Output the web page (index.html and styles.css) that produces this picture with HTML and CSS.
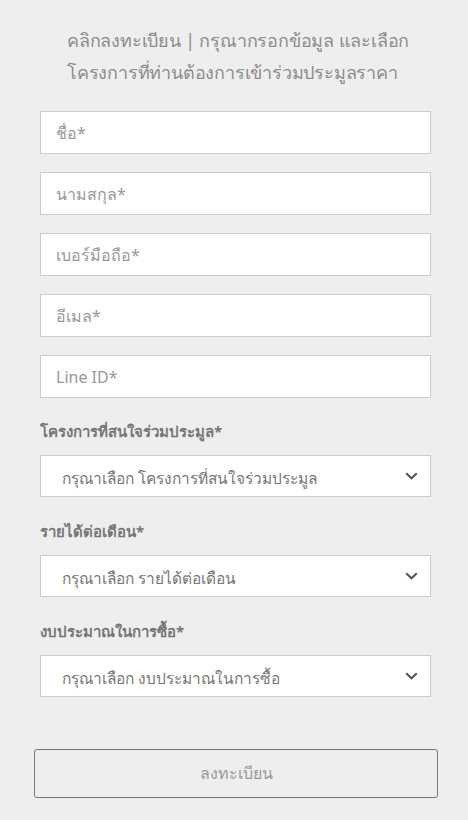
FILE: index.html
```html
<!DOCTYPE html>
<html lang="th">
<head>
    <meta charset="UTF-8">
    <meta name="viewport" content="width=device-width, initial-scale=1.0">
    <title>ลงทะเบียน</title>
    <link rel="stylesheet" href="styles.css">
</head>
<body>
    <div class="register">
        <h2 class="intro">คลิกลงทะเบียน | กรุณากรอกข้อมูล และเลือก<br>โครงการที่ท่านต้องการเข้าร่วมประมูลราคา</h2>
        <form class="form">
            <input class="field" type="text" placeholder="ชื่อ*">
            <input class="field" type="text" placeholder="นามสกุล*">
            <input class="field" type="text" placeholder="เบอร์มือถือ*">
            <input class="field" type="text" placeholder="อีเมล*">
            <input class="field" type="text" placeholder="Line ID*">

            <label class="label">โครงการที่สนใจร่วมประมูล*</label>
            <div class="select">
                <span>กรุณาเลือก โครงการที่สนใจร่วมประมูล</span>
                <svg width="13" height="8" viewBox="0 0 13 8"><path d="M1.2 1.2 L6.5 6.3 L11.8 1.2" fill="none" stroke="#555" stroke-width="2"/></svg>
            </div>

            <label class="label">รายได้ต่อเดือน*</label>
            <div class="select">
                <span>กรุณาเลือก รายได้ต่อเดือน</span>
                <svg width="13" height="8" viewBox="0 0 13 8"><path d="M1.2 1.2 L6.5 6.3 L11.8 1.2" fill="none" stroke="#555" stroke-width="2"/></svg>
            </div>

            <label class="label">งบประมาณในการซื้อ*</label>
            <div class="select">
                <span>กรุณาเลือก งบประมาณในการซื้อ</span>
                <svg width="13" height="8" viewBox="0 0 13 8"><path d="M1.2 1.2 L6.5 6.3 L11.8 1.2" fill="none" stroke="#555" stroke-width="2"/></svg>
            </div>

            <button class="submit" type="button">ลงทะเบียน</button>
        </form>
    </div>
</body>
</html>
```

FILE: styles.css
```css
* {
    box-sizing: border-box;
    font-family: "Noto Sans", "Liberation Sans", sans-serif;
}

body {
    margin: 0;
    background-color: #eeeeee;
}

.register {
    padding: 24px 30px 0 34px;
}

.intro {
    margin: 0 0 23px 0;
    padding-left: 33px;
    font-size: 18px;
    font-weight: normal;
    line-height: 32px;
    letter-spacing: -0.2px;
    white-space: nowrap;
    color: #8c8c8c;
}

.form {
    display: flex;
    flex-direction: column;
    padding: 0 7px 0 6px;
}

.field {
    height: 43px;
    margin-bottom: 18px;
    padding: 0 15px;
    font-size: 16px;
    color: #555;
    background: #fff;
    border: 1px solid #ccc;
    border-radius: 0;
}

.field::placeholder {
    color: #999;
}

.label {
    margin: 3px 0 12px 0;
    font-size: 15px;
    font-weight: bold;
    color: #777;
    line-height: 24px;
}

.select {
    height: 42px;
    margin-bottom: 19px;
    padding: 0 12px 0 21px;
    display: flex;
    align-items: center;
    justify-content: space-between;
    font-size: 15.5px;
    color: #777;
    background: #fff;
    border: 1px solid #ccc;
}

.select span {
    padding-top: 5px;
}

.submit {
    margin: 33px -7px 0 -6px;
    height: 49px;
    font-size: 16px;
    color: #999;
    background: #eeeeee;
    border: 1px solid #777;
    border-radius: 3px;
}
```
